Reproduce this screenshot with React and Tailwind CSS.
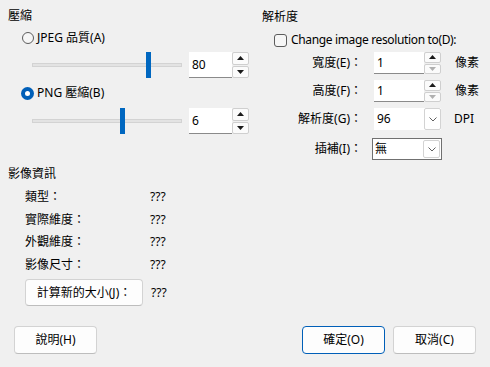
import React from "react";

const FONT = { fontFamily: '"Noto Sans", "Noto Sans CJK TC", sans-serif' };

function Tri({ up, color }) {
  return (
    <svg width="7" height="4" viewBox="0 0 7 4">
      {up ? (
        <polygon points="0,4 7,4 3.5,0" fill={color} />
      ) : (
        <polygon points="0,0 7,0 3.5,4" fill={color} />
      )}
    </svg>
  );
}

function Chevron() {
  return (
    <svg width="8" height="5" viewBox="0 0 8 5">
      <polyline points="0.5,0.5 4,4 7.5,0.5" fill="none" stroke="#606060" strokeWidth="1" />
    </svg>
  );
}

function Spin({ h, downColor = "#1a1a1a" }) {
  return (
    <div className="flex flex-col gap-[1px] w-[17px]" style={{ height: h }}>
      <div className="flex-1 flex items-center justify-center bg-[#fbfbfb] border border-[#cfcfcf] rounded-[2px]">
        <Tri up color="#1a1a1a" />
      </div>
      <div className="flex-1 flex items-center justify-center bg-[#fbfbfb] border border-[#cfcfcf] rounded-[2px]">
        <Tri color={downColor} />
      </div>
    </div>
  );
}

function Radio({ checked }) {
  if (checked)
    return (
      <div className="w-[13px] h-[13px] rounded-full bg-[#005fb8] flex items-center justify-center">
        <div className="w-[5px] h-[5px] rounded-full bg-white" />
      </div>
    );
  return <div className="w-[12px] h-[12px] rounded-full border border-[#5c5c5c] bg-[#f6f6f6]" />;
}

function SliderRow({ pos, value }) {
  return (
    <div className="flex items-center h-[26px]">
      <div className="relative ml-[24px] w-[150px] h-[26px]">
        <div className="absolute left-0 right-0 top-[11px] h-[4px] bg-[#e3e3e3] border border-[#d3d3d3]" />
        <div className="absolute top-0 w-[5px] h-[26px] bg-[#0067c0]" style={{ left: pos }} />
      </div>
      <div className="ml-[7px] w-[43px] h-[26px] bg-white border-b border-[#8a8a8a] flex items-center pl-[3px]">
        {value}
      </div>
      <Spin h={26} />
    </div>
  );
}

function Btn({ children, w, primary }) {
  return (
    <div
      className={
        "h-[28px] flex items-center justify-center rounded-[4px] bg-[#fdfdfd] " +
        (primary ? "border border-[#005fb8]" : "border border-[#d3d3d3] border-b-[#bdbdbd]")
      }
      style={{ width: w }}
    >
      {children}
    </div>
  );
}

function FieldRow({ label, children }) {
  return (
    <div className="flex items-center h-[22px]">
      <div className="w-[100px] text-right">{label}</div>
      <div className="ml-[12px] flex items-center">{children}</div>
    </div>
  );
}

export default function App() {
  return (
    <div className="w-[490px] h-[367px] bg-[#f0f0f0] text-[12px] text-black leading-[16px] flex flex-col" style={FONT}>
      <div className="flex h-[162px]">
        {/* Left: compression */}
        <div className="w-[254px] pl-[8px] pt-[8px] flex flex-col">
          <div>壓縮</div>
          <div className="mt-[6px] ml-[14px] flex items-center h-[16px]">
            <Radio />
            <span className="ml-[3px]">JPEG 品質(A)</span>
          </div>
          <div className="mt-[6px]">
            <SliderRow pos={114} value="80" />
          </div>
          <div className="mt-[7px] ml-[13px] flex items-center h-[16px]">
            <Radio checked />
            <span className="ml-[3px]">PNG 壓縮(B)</span>
          </div>
          <div className="mt-[7px]">
            <SliderRow pos={88} value="6" />
          </div>
        </div>
        {/* Right: resolution */}
        <div className="ml-[8px] pt-[9px] flex flex-col">
          <div>解析度</div>
          <div className="mt-[7px] ml-[12px] flex items-center h-[16px]">
            <div className="w-[13px] h-[13px] rounded-[3px] border border-[#5c5c5c] bg-[#f6f6f6]" />
            <span className="ml-[4px] tracking-[-0.35px]">Change image resolution to(D):</span>
          </div>
          <div className="mt-[4px] flex flex-col gap-[6px]">
            <FieldRow label="寬度(E)：">
              <div className="w-[50px] h-[22px] bg-white border-b border-[#8a8a8a] flex items-center pl-[3px]">1</div>
              <Spin h={22} downColor="#b0b0b0" />
              <span className="ml-[14px]">像素</span>
            </FieldRow>
            <FieldRow label="高度(F)：">
              <div className="w-[50px] h-[22px] bg-white border-b border-[#8a8a8a] flex items-center pl-[3px]">1</div>
              <Spin h={22} downColor="#b0b0b0" />
              <span className="ml-[14px]">像素</span>
            </FieldRow>
            <FieldRow label="解析度(G)：">
              <div className="w-[67px] h-[22px] bg-white flex items-center">
                <span className="flex-1 pl-[3px]">96</span>
                <div className="w-[17px] h-[22px] border border-[#d3d3d3] rounded-[2px] flex items-center justify-center">
                  <Chevron />
                </div>
              </div>
              <span className="ml-[13px]">DPI</span>
            </FieldRow>
          </div>
          <div className="mt-[8px] flex items-center h-[22px]">
            <div className="w-[100px] text-right">插補(I)：</div>
            <div className="ml-[10px] w-[70px] h-[22px] bg-white border border-[#707070] flex items-center pr-[1px]">
              <span className="flex-1 pl-[2px]">無</span>
              <div className="w-[17px] h-[18px] border border-[#d3d3d3] rounded-[2px] flex items-center justify-center">
                <Chevron />
              </div>
            </div>
          </div>
        </div>
      </div>

      {/* Image info */}
      <div className="pl-[8px] pt-[4px] flex flex-col">
        <div>影像資訊</div>
        <div className="mt-[4px] pl-[17px] flex flex-col">
          {["類型：", "實際維度：", "外觀維度：", "影像尺寸："].map((l) => (
            <div key={l} className="flex items-center h-[22.5px]">
              <span className="w-[125px]">{l}</span>
              <span>???</span>
            </div>
          ))}
          <div className="mt-[3px] flex items-center">
            <div className="w-[118px] h-[27px] rounded-[4px] bg-[#fdfdfd] border border-[#d3d3d3] border-b-[#bdbdbd] flex items-center justify-center">
              計算新的大小(J)：
            </div>
            <span className="ml-[8px]">???</span>
          </div>
        </div>
      </div>

      {/* Bottom buttons */}
      <div className="mt-[20px] px-[14px] flex items-center">
        <Btn w={83}>說明(H)</Btn>
        <div className="flex-1" />
        <Btn w={83} primary>確定(O)</Btn>
        <div className="w-[8px]" />
        <Btn w={83}>取消(C)</Btn>
      </div>
    </div>
  );
}
